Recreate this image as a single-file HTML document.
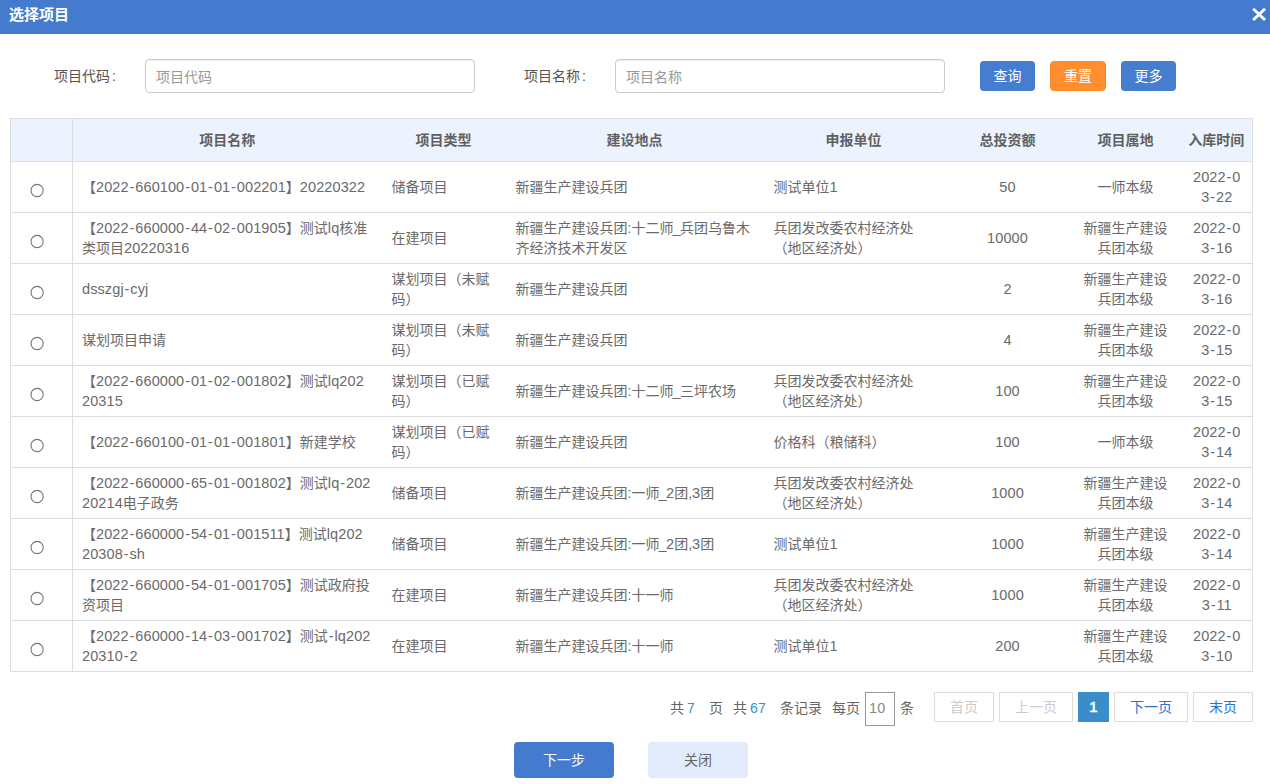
<!DOCTYPE html>
<html lang="zh-CN">
<head>
<meta charset="utf-8">
<title>选择项目</title>
<style>
*{box-sizing:border-box;margin:0;padding:0}
html,body{width:1270px;height:784px;overflow:hidden;background:#fff}
body{font-family:"Liberation Sans","Noto Sans CJK SC",sans-serif;font-size:14px;color:#666;position:relative}
.abs{position:absolute}
.titlebar{left:0;top:0;width:1270px;height:34px;background:#447bcf}
.titlebar .t{position:absolute;left:9px;top:0;line-height:30px;font-size:15px;font-weight:bold;color:#fff;letter-spacing:0}
.close{position:absolute;left:1250px;top:6px;width:20px;height:20px}
.lbl{position:absolute;top:59px;height:34px;line-height:34px;color:#555;font-size:14px;white-space:nowrap}
.inp{position:absolute;top:59px;height:34px;width:330px;border:1px solid #ccc;border-radius:4px;background:#fff;line-height:34px;padding-left:10px;color:#999;font-size:14px;box-shadow:inset 0 1px 1px rgba(0,0,0,.075)}
.btn{position:absolute;top:61px;height:30px;line-height:30px;width:55px;border-radius:4px;color:#fff;text-align:center;font-size:14px}
.b1{background:#457dd0}
.b2{background:#ff8e2f;border:1px solid #ff8722;line-height:28px;width:56px}
table{position:absolute;left:10px;top:118px;width:1242px;border-collapse:collapse;table-layout:fixed}
th,td{border-top:1px solid #ddd;border-bottom:1px solid #ddd;font-size:14px;line-height:20px;padding:0 10px;vertical-align:middle;white-space:nowrap;overflow:hidden}
table{border:1px solid #ddd}
th{height:43px;background:#edf3fe;color:#606060;font-weight:bold;text-align:center}
td{height:51px;color:#6a6a6a;text-align:left}
th:first-child,td:first-child{border-right:1px solid #ddd}
th:last-child{padding:0 0 0 1px}
td:last-child{padding:0 9px 0 11px}
td.c{text-align:center}
td.k2{padding-left:9px}
td.r{padding:0}
.n{font-size:14.5px;letter-spacing:.1px}
s{text-decoration:none}
s.u{margin:0 -.6px}
.n i{font-style:normal;padding:0 .85px}
.radio{display:block;width:16px;height:15px;margin:5px 0 0 18px;position:relative;top:1px}
.pg{position:absolute;top:694px;height:28px;line-height:28px;font-size:14px;color:#666;white-space:nowrap}
.pbtn{position:absolute;top:692px;height:30px;line-height:28px;border:1px solid #ddd;text-align:center;font-size:14px;background:#fff}
.dis{color:#ccc}
.lnk{color:#2a72d2}
.pg.lnk{color:#3a8fd0}
.cur{background:#3b8dca;color:#fff;border-color:#3b8dca;font-weight:normal;font-size:15px;-webkit-text-stroke:.6px #fff}
.big{position:absolute;top:742px;width:100px;height:36px;line-height:36px;text-align:center;border-radius:4px;font-size:14px}
</style>
</head>
<body>
<div class="abs titlebar"><span class="t">选择项目</span>
<svg class="close" viewBox="0 0 20 20"><path d="M3.15 2.65 L15.05 14.05 M15.05 2.65 L3.15 14.05" stroke="#fff" stroke-width="2.8" fill="none"/></svg>
</div>

<div class="lbl" style="left:54px">项目代码<s style="margin-left:2px">:</s></div>
<div class="inp" style="left:145px">项目代码</div>
<div class="lbl" style="left:524px">项目名称<s style="margin-left:2px">:</s></div>
<div class="inp" style="left:615px">项目名称</div>
<div class="btn b1" style="left:980px">查询</div>
<div class="btn b2" style="left:1050px">重置</div>
<div class="btn b1" style="left:1121px">更多</div>

<table>
<colgroup><col style="width:62px"><col style="width:309px"><col style="width:124px"><col style="width:258px"><col style="width:180px"><col style="width:128px"><col style="width:108px"><col style="width:73px"></colgroup>
<tr><th></th><th>项目名称</th><th>项目类型</th><th>建设地点</th><th>申报单位</th><th>总投资额</th><th>项目属地</th><th>入库时间</th></tr>
<tr><td class="r"><svg class="radio" viewBox="0 0 16 15"><circle cx="8.1" cy="7.5" r="6.1" fill="#fff" stroke="#747474" stroke-width="1.1"/></svg></td><td class="k2">【<span class="n">2022<i>-</i>660100<i>-</i>01<i>-</i>01<i>-</i>002201</span>】<span class="n">20220322</span></td><td>储备项目</td><td>新疆生产建设兵团</td><td>测试单位<span class="n">1</span></td><td class="c"><span class="n">50</span></td><td class="c">一师本级</td><td class="c"><span class="n">2022<i>-</i>0</span><br><span class="n">3<i>-</i>22</span></td></tr>
<tr><td class="r"><svg class="radio" viewBox="0 0 16 15"><circle cx="8.1" cy="7.5" r="6.1" fill="#fff" stroke="#747474" stroke-width="1.1"/></svg></td><td class="k2">【<span class="n">2022<i>-</i>660000<i>-</i>44<i>-</i>02<i>-</i>001905</span>】测试<span class="n">lq</span>核准<br>类项目<span class="n">20220316</span></td><td>在建项目</td><td>新疆生产建设兵团<s>:</s>十二师<s class="u">_</s>兵团乌鲁木<br>齐经济技术开发区</td><td>兵团发改委农村经济处<br>（地区经济处）</td><td class="c"><span class="n">10000</span></td><td class="c">新疆生产建设<br>兵团本级</td><td class="c"><span class="n">2022<i>-</i>0</span><br><span class="n">3<i>-</i>16</span></td></tr>
<tr><td class="r"><svg class="radio" viewBox="0 0 16 15"><circle cx="8.1" cy="7.5" r="6.1" fill="#fff" stroke="#747474" stroke-width="1.1"/></svg></td><td class="k2"><span class="n">dsszgj<i>-</i>cyj</span></td><td>谋划项目（未赋<br>码）</td><td>新疆生产建设兵团</td><td></td><td class="c"><span class="n">2</span></td><td class="c">新疆生产建设<br>兵团本级</td><td class="c"><span class="n">2022<i>-</i>0</span><br><span class="n">3<i>-</i>16</span></td></tr>
<tr><td class="r"><svg class="radio" viewBox="0 0 16 15"><circle cx="8.1" cy="7.5" r="6.1" fill="#fff" stroke="#747474" stroke-width="1.1"/></svg></td><td class="k2">谋划项目申请</td><td>谋划项目（未赋<br>码）</td><td>新疆生产建设兵团</td><td></td><td class="c"><span class="n">4</span></td><td class="c">新疆生产建设<br>兵团本级</td><td class="c"><span class="n">2022<i>-</i>0</span><br><span class="n">3<i>-</i>15</span></td></tr>
<tr><td class="r"><svg class="radio" viewBox="0 0 16 15"><circle cx="8.1" cy="7.5" r="6.1" fill="#fff" stroke="#747474" stroke-width="1.1"/></svg></td><td class="k2">【<span class="n">2022<i>-</i>660000<i>-</i>01<i>-</i>02<i>-</i>001802</span>】测试<span class="n">lq202</span><br><span class="n">20315</span></td><td>谋划项目（已赋<br>码）</td><td>新疆生产建设兵团<s>:</s>十二师<s class="u">_</s>三坪农场</td><td>兵团发改委农村经济处<br>（地区经济处）</td><td class="c"><span class="n">100</span></td><td class="c">新疆生产建设<br>兵团本级</td><td class="c"><span class="n">2022<i>-</i>0</span><br><span class="n">3<i>-</i>15</span></td></tr>
<tr><td class="r"><svg class="radio" viewBox="0 0 16 15"><circle cx="8.1" cy="7.5" r="6.1" fill="#fff" stroke="#747474" stroke-width="1.1"/></svg></td><td class="k2">【<span class="n">2022<i>-</i>660100<i>-</i>01<i>-</i>01<i>-</i>001801</span>】新建学校</td><td>谋划项目（已赋<br>码）</td><td>新疆生产建设兵团</td><td>价格科（粮储科）</td><td class="c"><span class="n">100</span></td><td class="c">一师本级</td><td class="c"><span class="n">2022<i>-</i>0</span><br><span class="n">3<i>-</i>14</span></td></tr>
<tr><td class="r"><svg class="radio" viewBox="0 0 16 15"><circle cx="8.1" cy="7.5" r="6.1" fill="#fff" stroke="#747474" stroke-width="1.1"/></svg></td><td class="k2">【<span class="n">2022<i>-</i>660000<i>-</i>65<i>-</i>01<i>-</i>001802</span>】测试<span class="n">lq<i>-</i>202</span><br><span class="n">20214</span>电子政务</td><td>储备项目</td><td>新疆生产建设兵团<s>:</s>一师<s class="u">_</s><span class="n">2</span>团<s>,</s><span class="n">3</span>团</td><td>兵团发改委农村经济处<br>（地区经济处）</td><td class="c"><span class="n">1000</span></td><td class="c">新疆生产建设<br>兵团本级</td><td class="c"><span class="n">2022<i>-</i>0</span><br><span class="n">3<i>-</i>14</span></td></tr>
<tr><td class="r"><svg class="radio" viewBox="0 0 16 15"><circle cx="8.1" cy="7.5" r="6.1" fill="#fff" stroke="#747474" stroke-width="1.1"/></svg></td><td class="k2">【<span class="n">2022<i>-</i>660000<i>-</i>54<i>-</i>01<i>-</i>001511</span>】测试<span class="n">lq202</span><br><span class="n">20308<i>-</i>sh</span></td><td>储备项目</td><td>新疆生产建设兵团<s>:</s>一师<s class="u">_</s><span class="n">2</span>团<s>,</s><span class="n">3</span>团</td><td>测试单位<span class="n">1</span></td><td class="c"><span class="n">1000</span></td><td class="c">新疆生产建设<br>兵团本级</td><td class="c"><span class="n">2022<i>-</i>0</span><br><span class="n">3<i>-</i>14</span></td></tr>
<tr><td class="r"><svg class="radio" viewBox="0 0 16 15"><circle cx="8.1" cy="7.5" r="6.1" fill="#fff" stroke="#747474" stroke-width="1.1"/></svg></td><td class="k2">【<span class="n">2022<i>-</i>660000<i>-</i>54<i>-</i>01<i>-</i>001705</span>】测试政府投<br>资项目</td><td>在建项目</td><td>新疆生产建设兵团<s>:</s>十一师</td><td>兵团发改委农村经济处<br>（地区经济处）</td><td class="c"><span class="n">1000</span></td><td class="c">新疆生产建设<br>兵团本级</td><td class="c"><span class="n">2022<i>-</i>0</span><br><span class="n">3<i>-</i>11</span></td></tr>
<tr><td class="r"><svg class="radio" viewBox="0 0 16 15"><circle cx="8.1" cy="7.5" r="6.1" fill="#fff" stroke="#747474" stroke-width="1.1"/></svg></td><td class="k2">【<span class="n">2022<i>-</i>660000<i>-</i>14<i>-</i>03<i>-</i>001702</span>】测试<span class="n"><i>-</i>lq202</span><br><span class="n">20310<i>-</i>2</span></td><td>在建项目</td><td>新疆生产建设兵团<s>:</s>十一师</td><td>测试单位<span class="n">1</span></td><td class="c"><span class="n">200</span></td><td class="c">新疆生产建设<br>兵团本级</td><td class="c"><span class="n">2022<i>-</i>0</span><br><span class="n">3<i>-</i>10</span></td></tr>
</table>

<div class="pg" style="left:670px">共</div>
<div class="pg lnk n" style="left:687px">7</div>
<div class="pg" style="left:709px">页</div>
<div class="pg" style="left:733px">共</div>
<div class="pg lnk n" style="left:750px">67</div>
<div class="pg" style="left:780px">条记录</div>
<div class="pg" style="left:832px">每页</div>
<div class="pbtn" style="left:865px;width:30px;border-color:#999;top:692px;height:34px;line-height:30px;text-align:left;padding-left:3px;color:#888"><span class="n">10</span></div>
<div class="pg" style="left:900px">条</div>
<div class="pbtn dis" style="left:934px;width:60px">首页</div>
<div class="pbtn dis" style="left:999px;width:74px">上一页</div>
<div class="pbtn cur" style="left:1078px;width:31px">1</div>
<div class="pbtn lnk" style="left:1114px;width:74px">下一页</div>
<div class="pbtn lnk" style="left:1193px;width:60px">末页</div>

<div class="big" style="left:514px;background:#447bcf;color:#fff">下一步</div>
<div class="big" style="left:648px;background:#e1ebfb;color:#666">关闭</div>
</body>
</html>
